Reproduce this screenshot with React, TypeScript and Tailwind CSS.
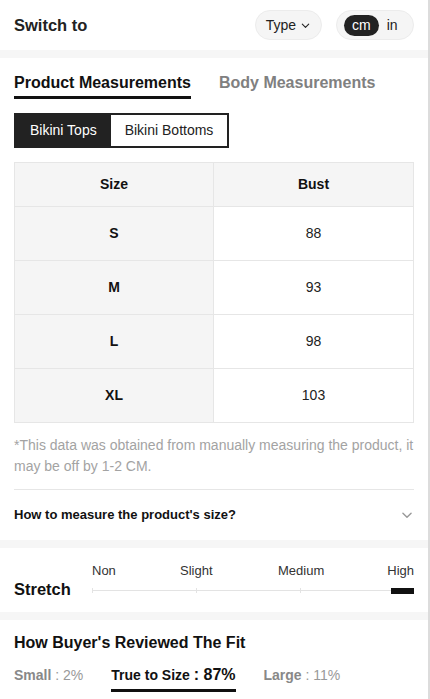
import React from 'react';

const ROWS = [
  { size: 'S', bust: '88' },
  { size: 'M', bust: '93' },
  { size: 'L', bust: '98' },
  { size: 'XL', bust: '103' },
];

function ChevronDown({ className }: { className?: string }) {
  return (
    <svg viewBox="0 0 12 12" className={className} fill="none" stroke="currentColor" strokeWidth="1.2">
      <path d="M2.5 4.5 L6 8 L9.5 4.5" strokeLinecap="round" strokeLinejoin="round" />
    </svg>
  );
}

export default function App() {
  return (
    <div
      className="w-[430px] h-[699px] overflow-hidden bg-white text-[#222] border-r-2 border-[#dcdcdc]"
      style={{ fontFamily: '"Liberation Sans", Arial, sans-serif' }}
    >
      {/* Header */}
      <div className="h-[50px] flex items-center justify-between pl-[14px] pr-[14px]">
        <span className="text-[16.5px] font-bold">Switch to</span>
        <div className="flex items-center gap-[14px]">
          <button className="h-[30px] px-[10px] rounded-full bg-[#f5f5f5] border border-[#ececec] flex items-center gap-[4px] text-[14px] text-[#222]">
            Type
            <ChevronDown className="w-[11px] h-[11px]" />
          </button>
          <div className="h-[30px] w-[78px] rounded-full bg-[#f5f5f5] border border-[#ececec] flex items-center px-[7px] gap-[8px] text-[14px]">
            <span className="h-[21px] px-[8px] rounded-full bg-[#222] text-white flex items-center">cm</span>
            <span className="text-[#222]">in</span>
          </div>
        </div>
      </div>
      <div className="h-[8px] bg-[#f6f6f6]" />

      {/* Tabs */}
      <div className="flex gap-[28px] px-[14px] pt-[14px]">
        <div className="flex flex-col">
          <span className="text-[16px] font-bold text-[#111] leading-[22px]">Product Measurements</span>
          <span className="mt-[2px] h-[3px] bg-[#111]" />
        </div>
        <span className="text-[16px] font-bold text-[#808080] leading-[22px]">Body Measurements</span>
      </div>

      {/* Segmented */}
      <div className="px-[14px] pt-[14px]">
        <div className="inline-flex h-[35px] bg-[#222] border-2 border-[#222] text-[14px]">
          <span className="px-[14px] flex items-center text-white">Bikini Tops</span>
          <span className="px-[14px] flex items-center bg-white text-[#222]">Bikini Bottoms</span>
        </div>
      </div>

      {/* Table */}
      <div className="px-[14px] pt-[14px]">
        <div className="border border-[#e6e6e6] text-[14px]">
          <div className="grid grid-cols-2 h-[43px] bg-[#f5f5f5] font-bold text-[#111]">
            <div className="flex items-center justify-center border-r border-[#e6e6e6]">Size</div>
            <div className="flex items-center justify-center">Bust</div>
          </div>
          {ROWS.map((r) => (
            <div key={r.size} className="grid grid-cols-2 h-[54px] border-t border-[#e6e6e6]">
              <div className="flex items-center justify-center bg-[#f5f5f5] font-bold text-[#111] border-r border-[#e6e6e6]">
                {r.size}
              </div>
              <div className="flex items-center justify-center text-[#222]">{r.bust}</div>
            </div>
          ))}
        </div>
      </div>

      {/* Footnote */}
      <p className="px-[14px] pt-[12px] text-[14px] leading-[21px] text-[#a3a3a3]">
        *This data was obtained from manually measuring the product, it may be off by 1-2 CM.
      </p>

      <div className="mx-[14px] mt-[12px] border-t border-[#e6e6e6]" />
      <div className="h-[50px] flex items-center justify-between px-[14px]">
        <span className="text-[13px] font-bold text-[#111]">How to measure the product's size?</span>
        <ChevronDown className="w-[14px] h-[14px] text-[#999]" />
      </div>
      <div className="h-[8px] bg-[#f6f6f6]" />

      {/* Stretch */}
      <div className="h-[64px] flex items-end px-[14px]">
        <span className="text-[16.5px] font-bold text-[#111] leading-[20px] w-[78px] shrink-0 mb-[13px]">Stretch</span>
        <div className="flex-1 flex flex-col mb-[15px]">
          <div className="flex text-[13px] text-[#333] leading-[16px]">
            <span className="w-[88px]">Non</span>
            <span className="w-[98px]">Slight</span>
            <span>Medium</span>
            <span className="ml-auto">High</span>
          </div>
          <div className="relative h-[12px] mt-[6px]">
            <div className="absolute left-0 right-0 top-[5px] h-[1px] bg-[#e3e3e3]" />
            <div className="absolute left-[0px] top-[3px] w-[1px] h-[5px] bg-[#e3e3e3]" />
            <div className="absolute left-[104px] top-[3px] w-[1px] h-[5px] bg-[#e3e3e3]" />
            <div className="absolute left-[208px] top-[3px] w-[1px] h-[5px] bg-[#e3e3e3]" />
            <div className="absolute right-0 top-[3px] w-[23px] h-[6px] bg-[#111]" />
          </div>
        </div>
      </div>
      <div className="h-[8px] bg-[#f6f6f6]" />

      {/* Fit */}
      <div className="px-[14px] pt-[12px]">
        <div className="text-[16px] font-bold text-[#111] leading-[22px]">How Buyer's Reviewed The Fit</div>
        <div className="flex items-start mt-[11px] text-[14px]">
          <span className="text-[#999] leading-[20px]">
            <span className="font-bold text-[#888]">Small</span> : 2%
          </span>
          <div className="ml-[28px] flex flex-col">
            <span className="leading-[20px] text-[#111] font-bold">
              True to Size <span className="text-[16px]">: 87%</span>
            </span>
            <span className="mt-[4px] h-[3px] bg-[#111]" />
          </div>
          <span className="ml-[28px] text-[#999] leading-[20px]">
            <span className="font-bold text-[#888]">Large</span> : 11%
          </span>
        </div>
      </div>
    </div>
  );
}
